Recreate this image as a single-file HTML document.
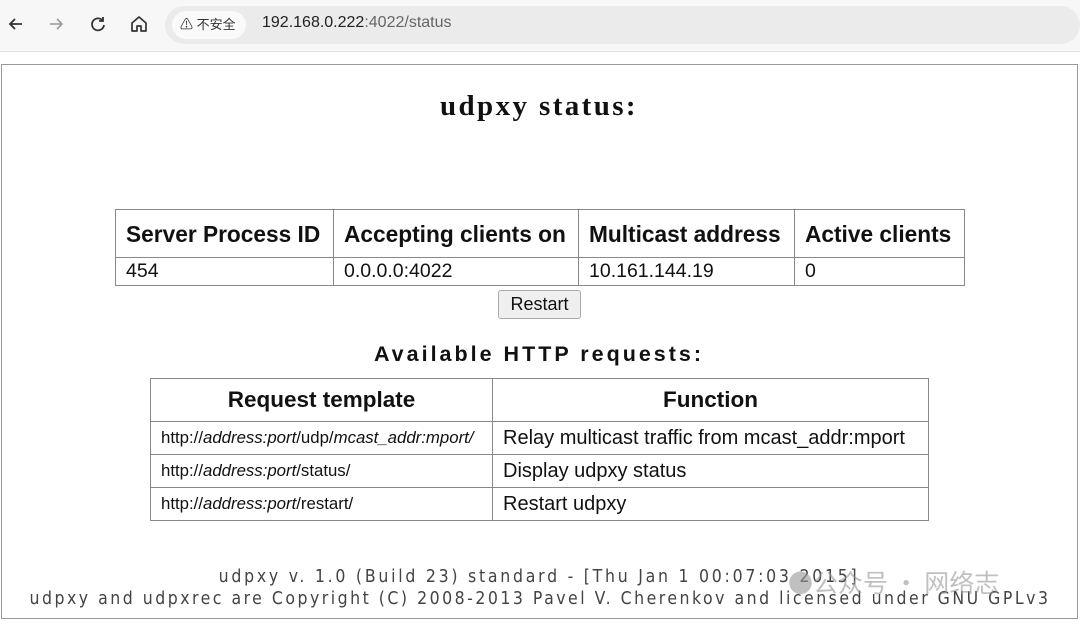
<!DOCTYPE html>
<html><head><meta charset="utf-8"><style>
*{margin:0;padding:0;box-sizing:border-box}
body{width:1080px;height:626px;background:#fff;position:relative;overflow:hidden;font-family:"Liberation Sans",Arial,sans-serif;color:#111}
.bar{position:absolute;left:0;top:0;width:1080px;height:52px;background:#f7f7f7;border-bottom:1px solid #e2e2e2}
.url{position:absolute;left:165px;top:6px;width:915px;height:38px;background:#ebebeb;border-radius:19px}
.chip{position:absolute;left:172px;top:11px;width:74px;height:28px;background:#fafafa;border-radius:14px;font:13px "Liberation Sans","Noto Sans CJK SC",sans-serif;line-height:28px;padding-left:8px;color:#333}
.addr{position:absolute;left:262px;top:14px;font-size:16px;color:#222}
.addr span{color:#666}
.ic{position:absolute;top:14px}
.frame{position:absolute;left:1px;top:64px;width:1077px;height:555px;border:1px solid #999}
.abs{position:absolute}
table{border-collapse:collapse;position:absolute}
td,th{border:1px solid #888;padding:0 10px;text-align:left;white-space:nowrap}
.t1 th{font-size:22.7px;font-weight:bold;height:48px;padding-top:2px}
.t1 td{font-size:19.5px;height:28px}
.t2 th{font-size:22.5px;text-align:center;height:43px}
.t2 td{height:33px;font-size:20px}
.t2 td.s{font-size:16.8px}
.foot{position:absolute;left:0;width:1080px;text-align:center;font-family:"DejaVu Sans Condensed","DejaVu Sans",sans-serif;font-size:17.5px;color:#444;letter-spacing:2.5px}
</style></head><body>
<div class="bar"></div>
<svg class="ic" style="left:6px" width="20" height="20" viewBox="0 0 20 20"><path d="M16 10H4M9 5L4 10l5 5" stroke="#333" stroke-width="1.8" fill="none"/></svg>
<svg class="ic" style="left:46px" width="20" height="20" viewBox="0 0 20 20"><path d="M4 10h12M11 5l5 5-5 5" stroke="#999" stroke-width="1.6" fill="none"/></svg>
<svg class="ic" style="left:88px" width="20" height="20" viewBox="0 0 20 20"><path d="M15 7A6 6 0 1 0 16 11M15 3v4h-4" stroke="#333" stroke-width="1.8" fill="none"/></svg>
<svg class="ic" style="left:129px" width="20" height="20" viewBox="0 0 20 20"><path d="M3 9L10 3l7 6v8h-5v-5H8v5H3z" stroke="#333" stroke-width="1.7" fill="none" stroke-linejoin="round"/></svg>
<div class="url"></div>
<div class="chip">⚠ 不安全</div>
<div class="addr">192.168.0.222<span>:4022/status</span></div>
<div class="frame"></div>
<div class="abs" style="left:0;width:1078px;top:90px;text-align:center;font:bold 29px 'Liberation Serif',serif;letter-spacing:2.4px">udpxy status:</div>
<table class="t1" style="left:115px;top:209px;width:850px">
<tr><th style="width:218px">Server Process ID</th><th style="width:245px">Accepting clients on</th><th style="width:216px">Multicast address</th><th>Active clients</th></tr>
<tr><td>454</td><td>0.0.0.0:4022</td><td>10.161.144.19</td><td>0</td></tr>
</table>
<div class="abs" style="left:498px;top:290px;width:83px;height:29px;border:1px solid #aaa;border-radius:3px;background:#efefef;font-size:18px;text-align:center;line-height:27px">Restart</div>
<div class="abs" style="left:0;width:1078px;top:342px;text-align:center;font-weight:bold;font-size:21.5px;letter-spacing:3px">Available HTTP requests:</div>
<table class="t2" style="left:150px;top:378px;width:779px">
<tr><th style="width:342px">Request template</th><th>Function</th></tr>
<tr><td class="s">http://<i>address:port</i>/udp/<i>mcast_addr:mport/</i></td><td>Relay multicast traffic from mcast_addr:mport</td></tr>
<tr><td class="s">http://<i>address:port</i>/status/</td><td>Display udpxy status</td></tr>
<tr><td class="s">http://<i>address:port</i>/restart/</td><td>Restart udpxy</td></tr>
</table>
<div class="foot" style="top:567px;left:-1px;letter-spacing:2.75px">udpxy v. 1.0 (Build 23) standard - [Thu Jan 1 00:07:03 2015]</div>
<div class="foot" style="top:589px">udpxy and udpxrec are Copyright (C) 2008-2013 Pavel V. Cherenkov and licensed under GNU GPLv3</div>
<div class="abs" style="left:788px;top:564px;font:25px 'Noto Sans CJK SC',sans-serif;color:rgba(150,150,150,.6)">●公众号 · 网络志</div>
</body></html>
